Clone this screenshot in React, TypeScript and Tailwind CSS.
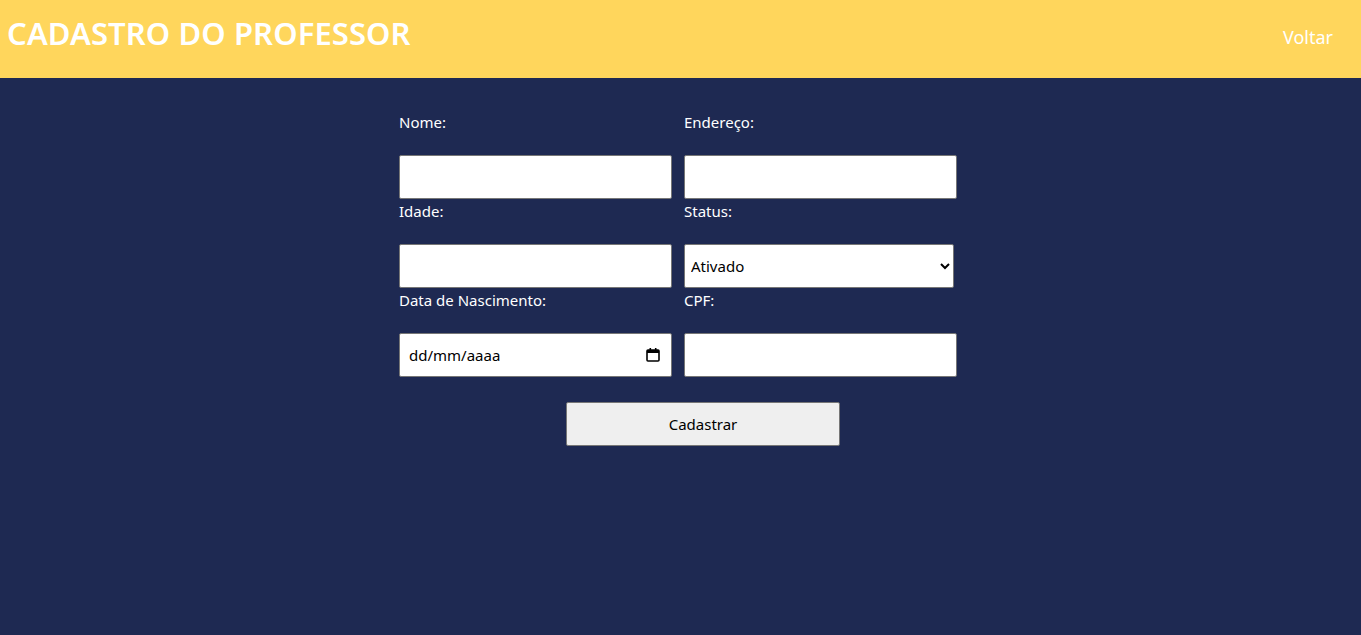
import React from "react"

const font = { fontFamily: '"Noto Sans", "Open Sans", sans-serif' }

function Field({ label, children }: { label: string; children: React.ReactNode }) {
    return (
        <div className="flex flex-col">
            <label className="h-[45px] text-[15px] leading-[24px] text-white">{label}</label>
            {children}
        </div>
    )
}

const inputCls = "h-[44px] w-[273px] bg-white border border-[#767676] rounded-[2px] px-1 text-[15px] text-black outline-none"

export default function App() {
    return (
        <div className="min-h-[635px] bg-[#1e2952]" style={font}>
            <header className="flex h-[78px] items-center justify-between bg-[#ffd65c] pl-[7px] pr-[28px]">
                <h1 className="text-[31px] font-semibold leading-none tracking-[0.1px] text-white pb-[12px]">CADASTRO DO PROFESSOR</h1>
                <a href="#" className="text-[18px] text-white pb-[4px]">Voltar</a>
            </header>

            <form className="ml-[399px] pt-[32px] w-[557px]" onSubmit={(e) => e.preventDefault()}>
                <div className="grid grid-cols-[272px_272px] gap-x-[13px]">
                    <Field label="Nome:">
                        <input type="text" className={inputCls} />
                    </Field>
                    <Field label="Endereço:">
                        <input type="text" className={inputCls} />
                    </Field>
                    <Field label="Idade:">
                        <input type="text" className={inputCls} />
                    </Field>
                    <Field label="Status:">
                        <select className="h-[44px] w-[270px] bg-white border border-[#767676] rounded-[2px] px-[2px] text-[15px] text-black">
                            <option>Ativado</option>
                            <option>Desativado</option>
                        </select>
                    </Field>
                    <Field label="Data de Nascimento:">
                        <div className="flex h-[44px] w-[273px] items-center justify-between bg-white border border-[#767676] rounded-[2px] pl-[9px] pr-[11px] text-[15px] text-black">
                            <span>dd/mm/aaaa</span>
                            <svg width="14" height="14" viewBox="0 0 14 14" fill="none">
                                <rect x="1" y="2" width="12" height="11" rx="1" stroke="#000" strokeWidth="1.6" />
                                <rect x="1" y="2" width="12" height="3" fill="#000" />
                                <rect x="3.5" y="0" width="1.6" height="3" fill="#000" />
                                <rect x="8.9" y="0" width="1.6" height="3" fill="#000" />
                            </svg>
                        </div>
                    </Field>
                    <Field label="CPF:">
                        <input type="text" className={inputCls} />
                    </Field>
                </div>
                <div className="mt-[25px] pl-[167px]">
                    <button type="submit" className="h-[44px] w-[274px] bg-[#efefef] border border-[#767676] rounded-[2px] text-[15px] text-black">
                        Cadastrar
                    </button>
                </div>
            </form>
        </div>
    )
}
